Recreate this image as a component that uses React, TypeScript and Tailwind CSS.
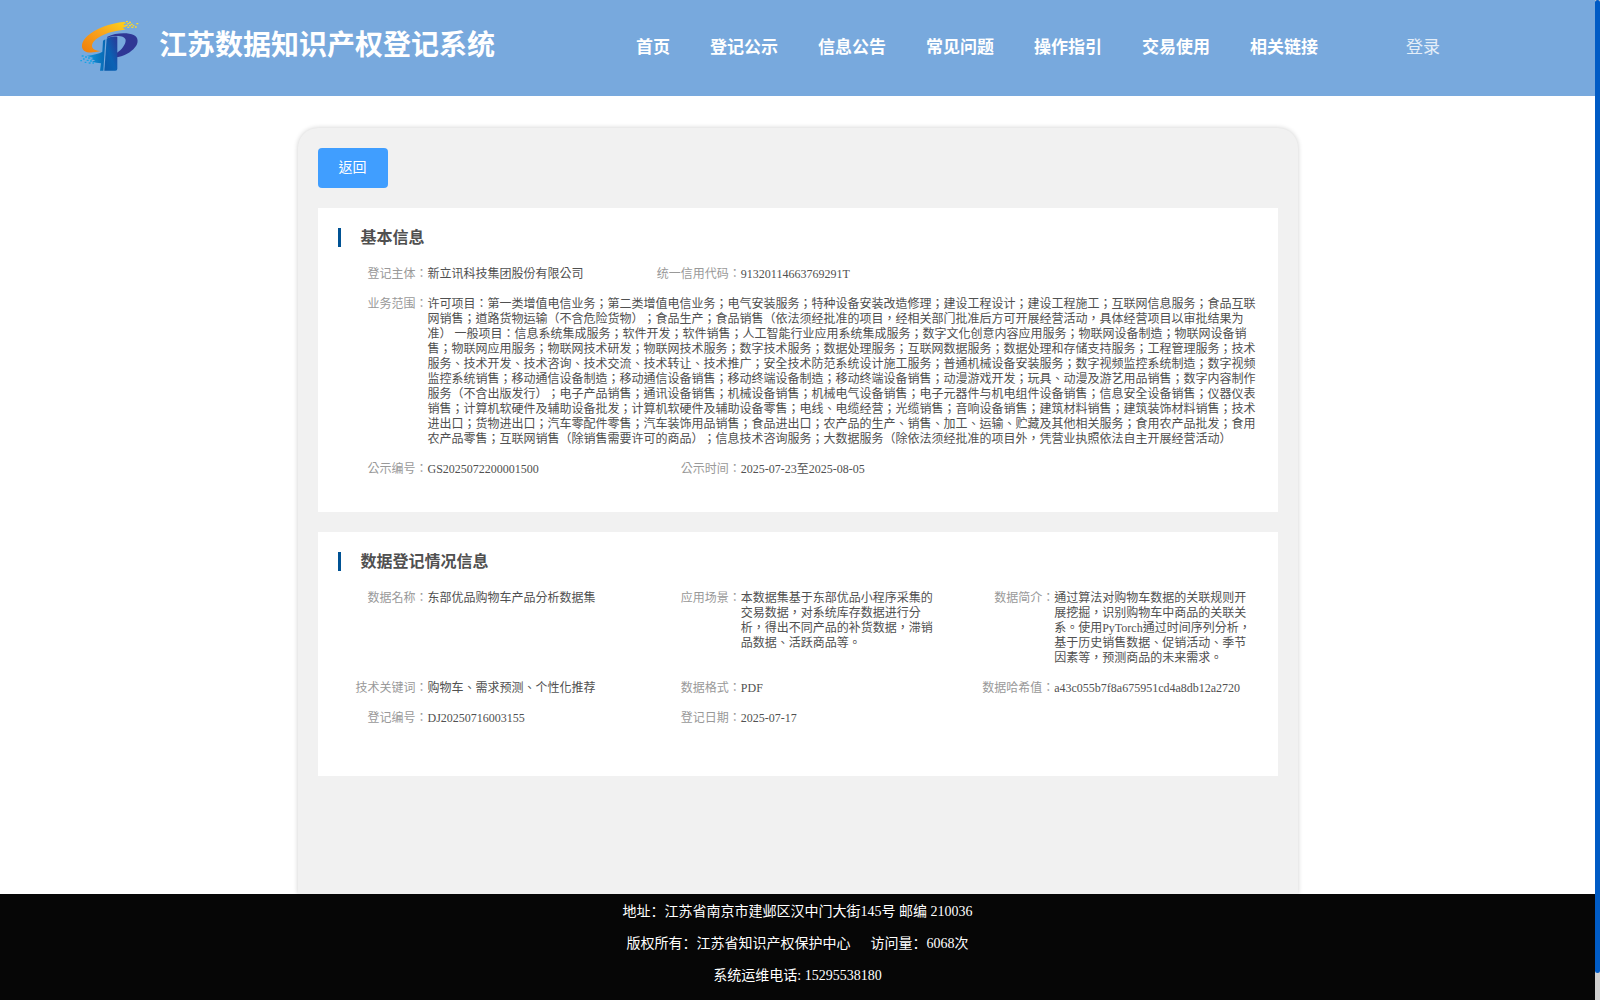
import React from "react";

type Field = { label: string; value: string; wide?: boolean; start?: boolean };

const navItems = ["首页", "登记公示", "信息公告", "常见问题", "操作指引", "交易使用", "相关链接"];

const basicInfo: Field[] = [
  { label: "登记主体", value: "新立讯科技集团股份有限公司" },
  { label: "统一信用代码", value: "91320114663769291T" },
  {
    label: "业务范围",
    wide: true,
    value:
      "许可项目：第一类增值电信业务；第二类增值电信业务；电气安装服务；特种设备安装改造修理；建设工程设计；建设工程施工；互联网信息服务；食品互联网销售；道路货物运输（不含危险货物）；食品生产；食品销售（依法须经批准的项目，经相关部门批准后方可开展经营活动，具体经营项目以审批结果为准） 一般项目：信息系统集成服务；软件开发；软件销售；人工智能行业应用系统集成服务；数字文化创意内容应用服务；物联网设备制造；物联网设备销售；物联网应用服务；物联网技术研发；物联网技术服务；数字技术服务；数据处理服务；互联网数据服务；数据处理和存储支持服务；工程管理服务；技术服务、技术开发、技术咨询、技术交流、技术转让、技术推广；安全技术防范系统设计施工服务；普通机械设备安装服务；数字视频监控系统制造；数字视频监控系统销售；移动通信设备制造；移动通信设备销售；移动终端设备制造；移动终端设备销售；动漫游戏开发；玩具、动漫及游艺用品销售；数字内容制作服务（不含出版发行）；电子产品销售；通讯设备销售；机械设备销售；机械电气设备销售；电子元器件与机电组件设备销售；信息安全设备销售；仪器仪表销售；计算机软硬件及辅助设备批发；计算机软硬件及辅助设备零售；电线、电缆经营；光缆销售；音响设备销售；建筑材料销售；建筑装饰材料销售；技术进出口；货物进出口；汽车零配件零售；汽车装饰用品销售；食品进出口；农产品的生产、销售、加工、运输、贮藏及其他相关服务；食用农产品批发；食用农产品零售；互联网销售（除销售需要许可的商品）；信息技术咨询服务；大数据服务（除依法须经批准的项目外，凭营业执照依法自主开展经营活动）",
  },
  { label: "公示编号", value: "GS2025072200001500", start: true },
  { label: "公示时间", value: "2025-07-23至2025-08-05" },
];

const dataInfo: Field[] = [
  { label: "数据名称", value: "东部优品购物车产品分析数据集" },
  {
    label: "应用场景",
    value:
      "本数据集基于东部优品小程序采集的交易数据，对系统库存数据进行分析，得出不同产品的补货数据，滞销品数据、活跃商品等。",
  },
  {
    label: "数据简介",
    value:
      "通过算法对购物车数据的关联规则开展挖掘，识别购物车中商品的关联关系。使用PyTorch通过时间序列分析，基于历史销售数据、促销活动、季节因素等，预测商品的未来需求。",
  },
  { label: "技术关键词", value: "购物车、需求预测、个性化推荐" },
  { label: "数据格式", value: "PDF" },
  { label: "数据哈希值", value: "a43c055b7f8a675951cd4a8db12a2720" },
  { label: "登记编号", value: "DJ20250716003155" },
  { label: "登记日期", value: "2025-07-17" },
];

function Logo() {
  return (
    <svg className="h-[52px] w-[60px] shrink-0" viewBox="30 28 180 156" aria-hidden="true">
      <defs>
        <linearGradient id="swoosh" x1="0" y1="1" x2="1" y2="0">
          <stop offset="0" stopColor="#ef7d0a" />
          <stop offset="0.5" stopColor="#f9a11c" />
          <stop offset="1" stopColor="#fdd31c" />
        </linearGradient>
        <linearGradient id="stem" x1="1" y1="0" x2="0" y2="1">
          <stop offset="0" stopColor="#2b3796" />
          <stop offset="0.55" stopColor="#0a62b4" />
          <stop offset="1" stopColor="#0a58a8" />
        </linearGradient>
        <linearGradient id="arm" x1="0" y1="0" x2="1" y2="0">
          <stop offset="0" stopColor="#119be0" />
          <stop offset="1" stopColor="#0767b3" />
        </linearGradient>
      </defs>
      <path
        fill="url(#swoosh)"
        d="M164 33 C118 38 76 54 52 76 C35 91 31 110 42 120 C52 128 74 126 93 121 C76 121 65 115 66 104 C68 87 96 71 128 63 C142 60 154 58 166 57 L158 51 L170 48 L160 41 L168 38 Z"
      />
      <g fill="#fdd92a">
        <path d="M168 31h6v4h-6zM177 33h6v4h-6zM172 37h6v4h-6zM182 39h6v4h-6zM166 42h7v4h-7zM177 43h6v4h-6zM188 43h5v4h-5zM199 37h6v4h-6zM172 48h6v4h-6zM184 48h6v4h-6zM195 47h5v4h-5z" />
      </g>
      <path
        fill="#2f3795"
        d="M112 78 C136 66 174 65 191 73 C206 80 206 97 195 110 C183 126 162 136 140 140 L141 126 C155 118 167 102 167 89 C167 79 153 75 136 76 C124 77 116 79 112 84 Z"
      />
      <path fill="url(#stem)" d="M110 84 C119 79 130 76 142 78 L142 174 Q142 180 136 180 L103 180 Z" />
      <path
        fill="url(#arm)"
        d="M50 135 C68 133 88 129 97 123 L99 90 L106 86 L100 180 L90 180 L93 158 C85 157 74 155 66 153 L76 149 L62 146 L70 142 Z"
      />
      <g fill="#18a3e4">
        <path d="M35 134h6v4h-6zM45 137h6v4h-6zM54 140h7v4h-7zM39 143h5v4h-5zM31 148h5v4h-5zM50 147h6v4h-6zM60 149h6v4h-6zM44 153h5v4h-5zM56 155h6v4h-6zM67 155h5v4h-5z" />
      </g>
    </svg>
  );
}

function InfoCard({ title, fields, className }: { title: string; fields: Field[]; className: string }) {
  return (
    <section className={`bg-white pt-5 pl-5 ${className}`}>
      <h2 className="border-l-[3px] border-[#005294] pl-5 text-base leading-[19px] font-bold">{title}</h2>
      <dl className="mt-5 grid grid-cols-3 gap-y-[15px] text-xs leading-[15px]">
        {fields.map((f) => (
          <div
            key={f.label}
            className={`flex min-w-0 ${f.wide ? "col-span-3" : ""} ${f.start ? "col-start-1" : ""}`}
          >
            <dt className="w-[90px] shrink-0 text-right whitespace-nowrap text-[#999999]">{f.label}：</dt>
            <dd className="min-w-0 flex-1 pr-5">{f.value}</dd>
          </div>
        ))}
      </dl>
    </section>
  );
}

export default function App() {
  return (
    <div className="flex min-h-screen bg-white font-['Liberation_Serif','Noto_Sans_CJK_SC',serif] text-[#505050] [text-spacing-trim:space-all]">
      <div className="flex min-w-0 flex-1 flex-col">
        <header className="flex h-24 items-center bg-[#78a9dd] pl-20 whitespace-nowrap text-white">
          <div className="flex items-center gap-[19px] pb-1">
            <Logo />
            <h1 className="text-[28px] leading-9 font-bold">江苏数据知识产权登记系统</h1>
          </div>
          <nav className="ml-[141px] flex gap-10 text-[17px] leading-6 font-bold">
            {navItems.map((item) => (
              <a key={item} href="#">
                {item}
              </a>
            ))}
          </nav>
          <a href="#" className="ml-[88px] text-[17px] leading-6 text-white/80">
            登录
          </a>
        </header>

        <main className="flex flex-1 flex-col overflow-hidden px-5 pt-8">
          <div className="mx-auto w-full max-w-[1000px] flex-1 rounded-t-[20px] bg-[#f1f1f1] p-5 font-['Liberation_Serif','Noto_Sans_CJK_TC',serif] shadow-[0_0_5px_rgba(0,0,0,0.2)]">
            <button
              type="button"
              className="block h-10 w-[70px] cursor-pointer rounded bg-[#409eff] text-sm text-white"
            >
              返回
            </button>
            <div className="mt-5 flex flex-col gap-5">
              <InfoCard title="基本信息" fields={basicInfo} className="pb-[35px]" />
              <InfoCard title="数据登记情况信息" fields={dataInfo} className="pb-[50px]" />
            </div>
          </div>
        </main>

        <footer className="h-[106px] bg-[#060606] pt-0.5 text-center text-sm leading-8 text-white">
          <p>地址：江苏省南京市建邺区汉中门大街145号 邮编 210036</p>
          <p>
            <span>版权所有：江苏省知识产权保护中心</span>
            <span className="ml-5">访问量：6068次</span>
          </p>
          <p>系统运维电话: 15295538180</p>
        </footer>
      </div>
      <div className="flex w-[5px] shrink-0 flex-col bg-[#cfcfcf]">
        <div className="h-[97.3%] rounded-sm bg-[#005bc5]" />
      </div>
    </div>
  );
}
